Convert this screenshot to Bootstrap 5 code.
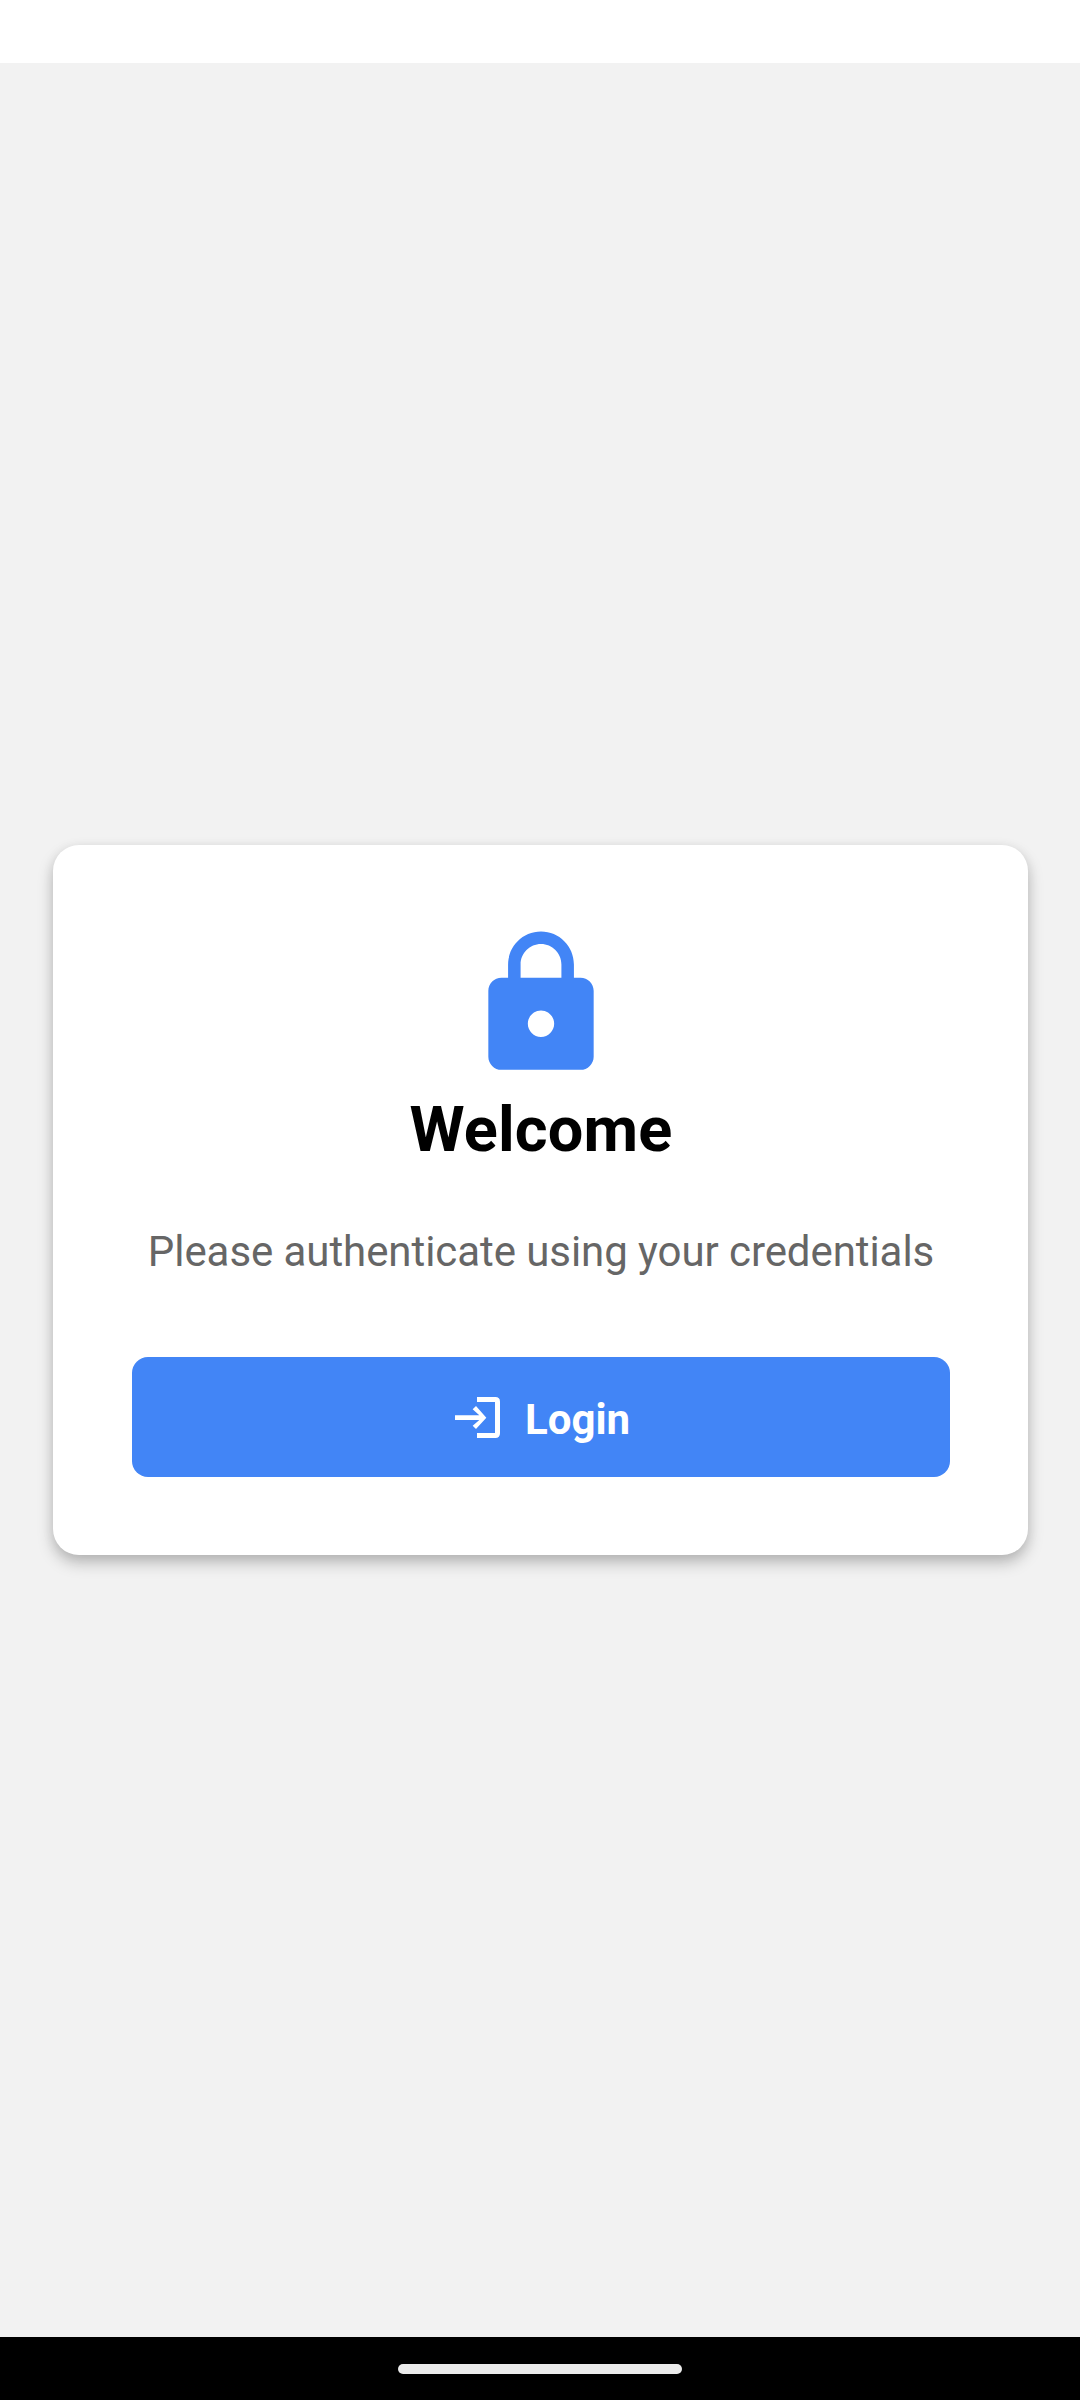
<!DOCTYPE html>
<html lang="en">
<head>
<meta charset="utf-8">
<meta name="viewport" content="width=device-width, initial-scale=1">
<title>Welcome</title>
<link href="https://cdn.jsdelivr.net/npm/bootstrap@5.3.0/dist/css/bootstrap.min.css" rel="stylesheet">
<style>
body { font-family: Roboto, "Liberation Sans", sans-serif; background: #f2f2f2; }
.status-strip { height: 63px; }
.login-area { padding-left: 53px; padding-right: 52px; }
.login-card { --bs-card-border-radius: 26px; height: 710px; padding: 80px 78px 78px 79px; box-shadow: 0 8px 16px rgba(0,0,0,.22), 0 3px 12px rgba(0,0,0,.08); }
.lock-icon { width: 158px; height: 158px; fill: #4285f6; }
.welcome-title { font-size: 63px; line-height: 74px; letter-spacing: .15px; margin-top: 10px; margin-bottom: 60px; }
.welcome-text { font-size: 42px; line-height: 49px; letter-spacing: -.07px; color: #666; margin-bottom: 81px; }
.login-btn { --bs-btn-bg: #4285f6; --bs-btn-hover-bg: #3577e6; --bs-btn-active-bg: #2f6fdb; --bs-btn-font-size: 42px; --bs-btn-line-height: 49px; --bs-btn-border-radius: 16px; height: 120px; gap: 25px; padding: 5px 9px 0 12px; }
.login-icon { width: 45px; height: 41px; margin-top: -4px; }
.gesture-bar { height: 63px; }
.gesture-pill { width: 284px; height: 10px; background: #ebebeb; }
</style>
</head>
<body>
<div class="d-flex flex-column vh-100">
  <header class="status-strip bg-white flex-shrink-0"></header>
  <main class="login-area flex-grow-1 d-flex flex-column justify-content-center">
    <section class="card login-card border-0 text-center align-items-center">
      <svg class="lock-icon flex-shrink-0" viewBox="0 0 24 24" aria-hidden="true"><path d="M18 8h-1V6c0-2.76-2.24-5-5-5S7 3.24 7 6v2H6c-1.1 0-2 .9-2 2v10c0 1.1.9 2 2 2h12c1.1 0 2-.9 2-2V10c0-1.1-.9-2-2-2zm-6 9c-1.100 0-2-.9-2-2s.9-2 2-2 2 .9 2 2-.9 2-2 2zm3.100-9H8.900V6c0-1.710 1.390-3.100 3.100-3.100s3.100 1.390 3.100 3.100v2z"/></svg>
      <h1 class="welcome-title fw-bold text-black">Welcome</h1>
      <p class="welcome-text text-nowrap">Please authenticate using your credentials</p>
      <button type="button" class="btn btn-primary login-btn w-100 border-0 fw-bold d-flex align-items-center justify-content-center">
        <svg class="login-icon" viewBox="0 0 135 123" aria-hidden="true"><path fill="#fff" d="M66 0H121Q135 0 135 14V109Q135 123 121 123H66V108H120V15H66ZM0 55H73L53 37L63 27L94 62L63 96L53 86L73 69H0Z"/></svg>
        <span>Login</span>
      </button>
    </section>
  </main>
  <footer class="gesture-bar bg-black flex-shrink-0 d-flex align-items-center justify-content-center">
    <div class="gesture-pill rounded-pill"></div>
  </footer>
</div>
<script src="https://cdn.jsdelivr.net/npm/bootstrap@5.3.0/dist/js/bootstrap.bundle.min.js"></script>
</body>
</html>
